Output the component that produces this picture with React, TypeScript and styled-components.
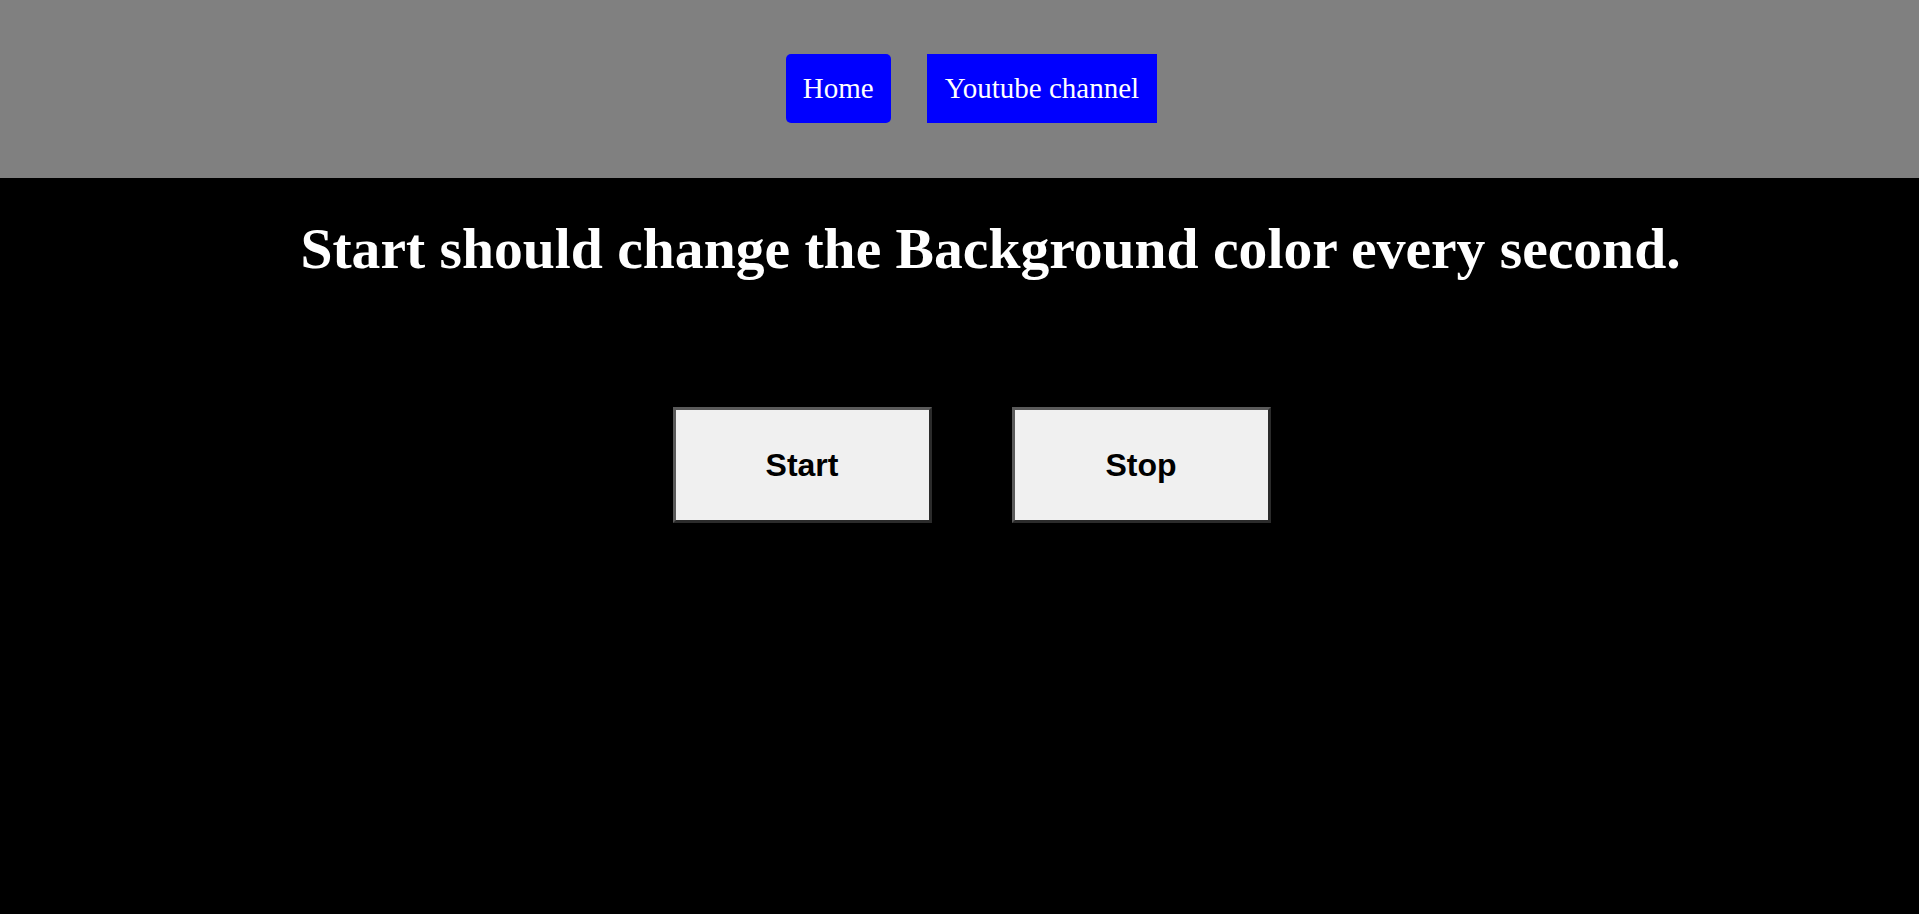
import React from "react";
import styled, { createGlobalStyle } from "styled-components";

const GlobalStyle = createGlobalStyle`
  html, body {
    margin: 0;
    padding: 0;
    background: #000000;
  }
  body {
    font-family: "Liberation Serif", "Times New Roman", serif;
  }
`;

const Page = styled.div`
  min-height: 914px;
  background: #000000;
  display: flex;
  flex-direction: column;
`;

const Header = styled.header`
  height: 178px;
  background: #808080;
  display: flex;
  align-items: center;
  justify-content: center;
  gap: 36px;
  padding-left: 24px;
  padding-bottom: 2px;
  box-sizing: border-box;
`;

const NavLink = styled.a<{ $rounded?: boolean }>`
  display: flex;
  align-items: center;
  justify-content: center;
  height: 69px;
  padding: 0 ${(p) => (p.$rounded ? "17px" : "18px")};
  box-sizing: border-box;
  background: #0000ff;
  color: #ffffff;
  font-family: "Liberation Serif", "Times New Roman", serif;
  font-size: 29px;
  text-decoration: none;
  border-radius: ${(p) => (p.$rounded ? "5px" : "0")};
  cursor: pointer;
`;

const Title = styled.h1`
  margin: 36px 0 0;
  padding-left: 62px;
  text-align: center;
  color: #ffffff;
  font-family: "Liberation Serif", "Times New Roman", serif;
  font-weight: bold;
  font-size: 57.6px;
  line-height: 1.2;
`;

const Controls = styled.div`
  margin-top: 124px;
  display: flex;
  justify-content: center;
  gap: 80px;
  padding-left: 24px;
`;

const ControlButton = styled.button`
  width: 259px;
  height: 116px;
  box-sizing: border-box;
  background: #f0f0f0;
  color: #000000;
  font-family: "Liberation Sans", Arial, sans-serif;
  font-weight: bold;
  font-size: 32px;
  border-style: solid;
  border-width: 3px;
  border-color: #5a5a5a #2b2b2b #2b2b2b #5a5a5a;
  padding: 0;
  cursor: pointer;
`;

export default function App() {
  return (
    <>
      <GlobalStyle />
      <Page>
        <Header>
          <NavLink $rounded>Home</NavLink>
          <NavLink>Youtube channel</NavLink>
        </Header>
        <Title>Start should change the Background color every second.</Title>
        <Controls>
          <ControlButton>Start</ControlButton>
          <ControlButton>Stop</ControlButton>
        </Controls>
      </Page>
    </>
  );
}
